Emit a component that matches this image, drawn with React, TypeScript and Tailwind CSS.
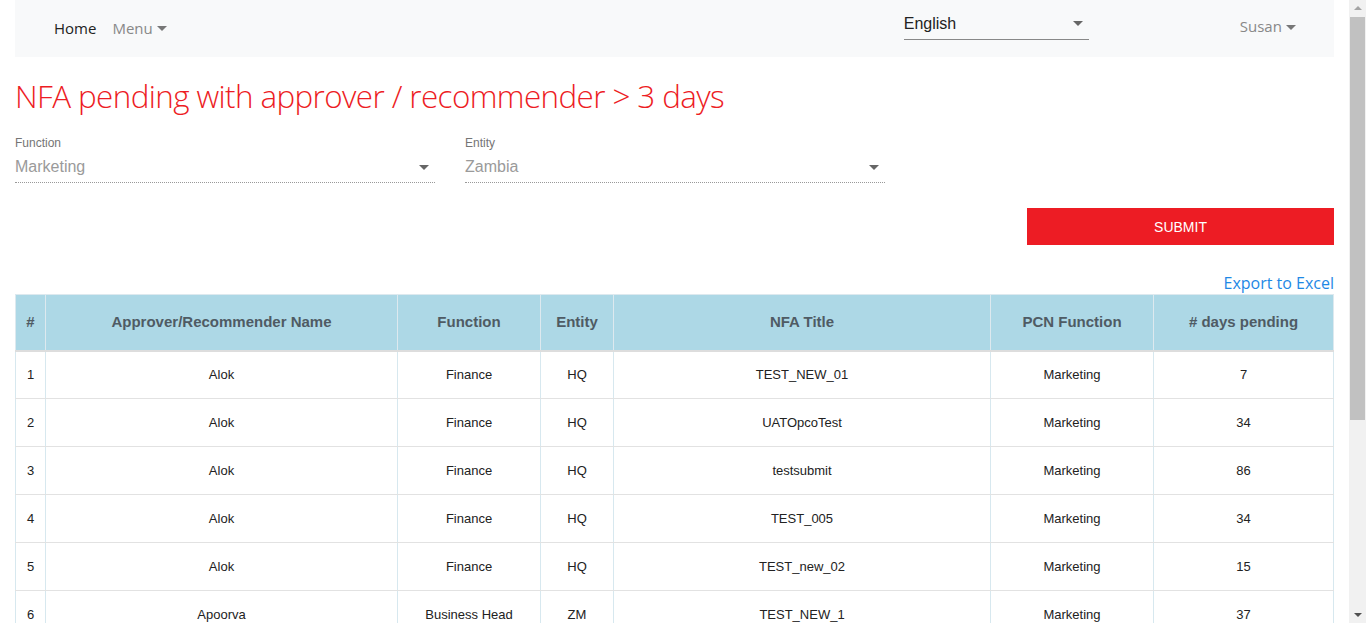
import React from "react";

const rows = [
  ["1", "Alok", "Finance", "HQ", "TEST_NEW_01", "Marketing", "7"],
  ["2", "Alok", "Finance", "HQ", "UATOpcoTest", "Marketing", "34"],
  ["3", "Alok", "Finance", "HQ", "testsubmit", "Marketing", "86"],
  ["4", "Alok", "Finance", "HQ", "TEST_005", "Marketing", "34"],
  ["5", "Alok", "Finance", "HQ", "TEST_new_02", "Marketing", "15"],
  ["6", "Apoorva", "Business Head", "ZM", "TEST_NEW_1", "Marketing", "37"],
  ["7", "Apoorva", "Business Head", "ZM", "TEST_NEW_2", "Marketing", "21"],
  ["8", "Apoorva", "Business Head", "ZM", "testpcn", "Marketing", "12"],
  ["9", "Ravi", "Legal", "HQ", "TEST_009", "Marketing", "9"],
  ["10", "Ravi", "Legal", "HQ", "NFA_Check", "Marketing", "5"],
  ["11", "Susan", "Marketing", "ZM", "TEST_011", "Marketing", "4"],
];

const cols = ["w-[30px]", "w-[352px]", "w-[143px]", "w-[73px]", "w-[377px]", "w-[163px]", "w-[180px]"];
const heads = ["#", "Approver/Recommender Name", "Function", "Entity", "NFA Title", "PCN Function", "# days pending"];

function Caret({ className = "" }: { className?: string }) {
  return (
    <svg width="10" height="5" viewBox="0 0 10 5" className={className}>
      <path d="M0 0h10L5 5z" fill="currentColor" />
    </svg>
  );
}

function Select({ label, value }: { label: string; value: string }) {
  return (
    <div className="w-[420px]">
      <div className="text-[12px] leading-[14px] text-[#757575]">{label}</div>
      <div className="mt-[6px] flex items-center justify-between border-b border-dotted border-[#999] pb-[4px]">
        <span className="text-[16px] leading-[22px] text-[#9a9a9a]">{value}</span>
        <Caret className="mr-[6px] text-[#666]" />
      </div>
    </div>
  );
}

export default function App() {
  return (
    <div className="w-[1349px] px-[15px] pb-[40px] font-['Liberation_Sans',Arial,sans-serif] text-[#333] bg-white">
      <nav className="h-[57px] bg-[#f8f9fa] flex items-center font-['Open_Sans',sans-serif]">
        <div className="flex items-center ml-[39px] gap-[16px] text-[15px]">
          <span className="text-[#222]">Home</span>
          <span className="flex items-center gap-[4px] text-[#888]">
            Menu <Caret className="text-[#777]" />
          </span>
        </div>
        <div className="ml-[737px] w-[185px] -mt-[6px] flex items-center justify-between border-b border-[#888] pb-[3px] font-['Liberation_Sans',Arial,sans-serif]">
          <span className="text-[16px] text-[#222]">English</span>
          <Caret className="mr-[6px] text-[#666]" />
        </div>
        <div className="ml-[151px] -mt-[4px] flex items-center gap-[4px] text-[15px] text-[#888]">
          Susan <Caret className="text-[#777] mt-[2px]" />
        </div>
      </nav>

      <h1 className="mt-[18px] text-[31.4px] leading-[42px] font-light text-[#ed1c24] font-['Open_Sans',sans-serif] tracking-[-0.6px]">
        NFA pending with approver / recommender &gt; 3 days
      </h1>

      <div className="mt-[19px] flex gap-[30px]">
        <Select label="Function" value="Marketing" />
        <Select label="Entity" value="Zambia" />
      </div>

      <div className="mt-[25px] flex justify-end">
        <button className="w-[307px] h-[37px] pt-[1px] bg-[#ed1c24] text-white text-[14px]">SUBMIT</button>
      </div>

      <div className="mt-[28px] flex justify-end">
        <span className="text-[16px] leading-[20px] text-[#1e88e5] font-['Open_Sans',sans-serif]">Export to Excel</span>
      </div>

      <table className="mt-[1px] w-[1319px] border-collapse table-fixed">
        <thead>
          <tr className="h-[56px] bg-[#add8e6]">
            {heads.map((h, i) => (
              <th
                key={i}
                className={`${cols[i]} border border-[#dde9ef] border-b-2 border-b-[#ddd] text-[15px] font-bold text-[#4f5b64] text-center`}
              >
                {h}
              </th>
            ))}
          </tr>
        </thead>
        <tbody>
          {rows.map((r) => (
            <tr key={r[0]} className="h-[48px]">
              {r.map((c, i) => (
                <td
                  key={i}
                  className={`border-x border-x-[#d7e8ef] border-b border-b-[#e2e2e2] text-[13px] text-[#222] ${i === 0 ? "text-left pl-[11px]" : "text-center"}`}
                >
                  {c}
                </td>
              ))}
            </tr>
          ))}
        </tbody>
      </table>

      <div className="fixed right-0 top-0 w-[17px] h-[623px] bg-[#f1f1f1] flex flex-col items-center">
        <svg width="8" height="4" viewBox="0 0 8 4" className="mt-[6px] text-[#a3a3a3]">
          <path d="M0 4h8L4 0z" fill="currentColor" />
        </svg>
        <div className="mt-[7px] w-[15px] h-[403px] bg-[#c1c1c1]" />
        <div className="flex-1" />
        <svg width="8" height="4" viewBox="0 0 8 4" className="mb-[6px] text-[#505050]">
          <path d="M0 0h8L4 4z" fill="currentColor" />
        </svg>
      </div>
    </div>
  );
}
